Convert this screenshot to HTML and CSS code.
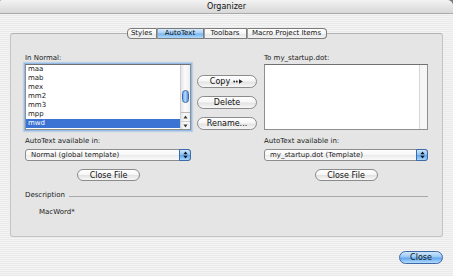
FILE: index.html
```html
<!DOCTYPE html>
<html>
<head>
<meta charset="utf-8">
<link rel="stylesheet" href="styles.css">
</head>
<body>
<div class="window">
  <div class="titlebar">Organizer</div>
  <div class="body">
    <div class="tabs">
      <span class="tab t1">Styles</span><span class="tab t2 sel">AutoText</span><span class="tab t3">Toolbars</span><span class="tab t4">Macro Project Items</span>
    </div>
    <div class="group">
      <div class="lists">
        <div class="col-left">
          <div class="label">In Normal:</div>
          <div class="list focus">
            <ul class="items">
              <li>maa</li>
              <li>mab</li>
              <li>mex</li>
              <li>mm2</li>
              <li>mm3</li>
              <li>mpp</li>
              <li class="sel">mwd</li>
            </ul>
            <div class="scroll">
              <div class="thumb"></div>
              <div class="arrows">
                <div class="arrow"><svg width="5" height="4" viewBox="0 0 5 4"><polygon points="2.5,0.5 4.5,3.5 0.5,3.5" fill="#333"/></svg></div>
                <div class="arrow"><svg width="5" height="4" viewBox="0 0 5 4"><polygon points="0.5,0.5 4.5,0.5 2.5,3.5" fill="#333"/></svg></div>
              </div>
            </div>
          </div>
        </div>
        <div class="col-mid">
          <button class="btn">Copy <svg class="copyarrow" width="11" height="5" viewBox="0 0 11 5"><circle cx="1.2" cy="2.5" r="0.9" fill="#222"/><circle cx="3.8" cy="2.5" r="0.9" fill="#222"/><polygon points="6,0.3 9.8,2.5 6,4.7" fill="#222"/></svg></button>
          <button class="btn">Delete</button>
          <button class="btn">Rename...</button>
        </div>
        <div class="col-right">
          <div class="label">To my_startup.dot:</div>
          <div class="list">
            <ul class="items"></ul>
            <div class="scroll empty"></div>
          </div>
        </div>
      </div>
      <div class="avail">
        <div class="avail-col avail-left">
          <div class="label">AutoText available in:</div>
          <div class="select">
            <span class="select-text">Normal (global template)</span>
            <span class="select-btn"><svg width="5" height="8" viewBox="0 0 5 8"><polygon points="2.5,0.5 4.6,3.2 0.4,3.2" fill="#111"/><polygon points="0.4,4.8 4.6,4.8 2.5,7.5" fill="#111"/></svg></span>
          </div>
          <button class="btn closefile">Close File</button>
        </div>
        <div class="avail-col avail-right">
          <div class="label">AutoText available in:</div>
          <div class="select">
            <span class="select-text">my_startup.dot (Template)</span>
            <span class="select-btn"><svg width="5" height="8" viewBox="0 0 5 8"><polygon points="2.5,0.5 4.6,3.2 0.4,3.2" fill="#111"/><polygon points="0.4,4.8 4.6,4.8 2.5,7.5" fill="#111"/></svg></span>
          </div>
          <button class="btn closefile">Close File</button>
        </div>
      </div>
      <div class="desc">
        <div class="desc-head"><span class="desc-label">Description</span><span class="rule"></span></div>
        <div class="desc-text">MacWord*</div>
      </div>
    </div>
    <div class="footer">
      <button class="btn default">Close</button>
    </div>
  </div>
</div>
</body>
</html>
```

FILE: styles.css
```css
* { box-sizing: border-box; margin: 0; padding: 0; }
html, body { width: 453px; height: 276px; overflow: hidden; background: #7a7a7a; }
body { font-family: "DejaVu Sans", "Liberation Sans", sans-serif; font-size: 7px; color: #1a1a1a; }

.window {
  width: 453px; height: 276px;
  background: repeating-linear-gradient(to bottom, #f4f4f4 0, #f4f4f4 1px, #eaeaea 1px, #eaeaea 2px);
  border-top-right-radius: 6px;
  border-top-left-radius: 2px;
  overflow: hidden;
  display: flex; flex-direction: column;
}
.titlebar {
  flex: none; height: 14px;
  background: linear-gradient(#f3f3f3, #e2e2e2 60%, #d8d8d8);
  border-bottom: 1px solid #a9a9a9;
  font-size: 8px; line-height: 13px; text-align: center; color: #111;
}
.body { flex: 1; padding: 0 10px; display: flex; flex-direction: column; }

.tabs { display: flex; justify-content: center; margin-top: 14px; height: 11px; position: relative; z-index: 1; }
.tab {
  height: 11px; line-height: 9px; text-align: center; color: #111;
  border: 1px solid #7c7c7c; border-left: 1px solid #9c9c9c;
  background: linear-gradient(#ffffff, #f5f5f5 50%, #e6e6e6 52%, #f2f2f2);
}
.tab.t1 { width: 30px; border-left-color: #7c7c7c; border-radius: 4px 0 0 4px; }
.tab.t2 { width: 47px; }
.tab.t3 { width: 43px; }
.tab.t4 { width: 80px; border-radius: 0 4px 4px 0; }
.tab.sel { background: linear-gradient(#d4eafc, #a4cff6 48%, #74b3ef 52%, #b0d9fb); }

.group {
  margin-top: -6px; height: 204px;
  border: 1px solid #c3c3c3; border-top-color: #b2b2b2;
  border-radius: 3px; background: #e5e5e5;
  padding: 20px 14px 0 14px;
}

.lists { display: flex; height: 76px; }
.col-left { width: 167px; }
.col-mid { width: 60px; margin-left: 5px; padding-top: 21px; display: flex; flex-direction: column; gap: 8px; }
.col-right { width: 164px; margin-left: 7px; }
.label { height: 9px; line-height: 9px; margin-bottom: 1px; white-space: nowrap; }

.list { height: 66px; border: 1px solid #8f8f8f; border-top-color: #707070; background: #fff; display: flex; }
.list.focus { width: 166px; box-shadow: 0 0 0 1px #93bbe8, 0 0 1px 2px rgba(120,170,230,.35); }
.items { flex: 1; list-style: none; }
.items li { height: 9px; line-height: 9px; padding-left: 2px; }
.items li.sel { background: #3b73d5; color: #fff; }

.scroll {
  width: 10px; border-left: 1px solid #cfcfcf;
  background: linear-gradient(to right, #e6e6e6, #fbfbfb 45%, #eeeeee);
  display: flex; flex-direction: column; align-items: center;
}
.thumb {
  margin-top: 25px; width: 7px; height: 13px; border-radius: 4px;
  border: 1px solid #3a6bb0;
  background: linear-gradient(to right, #6fa6e6, #b9dbfb 45%, #4f8fdc);
}
.arrows { margin-top: auto; width: 100%; border-top: 1px solid #b9b9b9; }
.arrow { height: 8px; display: flex; align-items: center; justify-content: center; }
.arrow + .arrow { border-top: 1px solid #cfcfcf; }
.scroll.empty { width: 8px; border-left-color: #d6d6d6; background: #f6f6f6; }

.btn {
  display: flex; align-items: center; justify-content: center; gap: 2px;
  height: 13px; border: 1px solid #8b8b8b; border-radius: 7px;
  background: linear-gradient(#ffffff, #f6f6f6 45%, #e3e3e3 55%, #f7f7f7);
  font-family: "DejaVu Sans", "Liberation Sans", sans-serif; font-size: 8px; line-height: 11px; color: #111;
  white-space: nowrap;
}
.copyarrow { margin-left: 1px; }

.avail { display: flex; margin-top: 7px; }
.avail-col { display: flex; flex-direction: column; }
.avail-left { width: 167px; }
.avail-right { width: 164px; margin-left: 72px; }
.select {
  margin-top: 2px; height: 12px; display: flex;
  border: 1px solid #8c8c8c; border-radius: 3px;
  background: linear-gradient(#ffffff, #f6f6f6 50%, #ececec 55%, #fafafa);
}
.avail-left .select { width: 166px; }
.select-text { flex: 1; padding-left: 5px; line-height: 10px; white-space: nowrap; }
.select-btn {
  width: 12px; margin: -1px -1px -1px 0; border: 1px solid #3d6aa8; border-radius: 0 3px 3px 0;
  background: linear-gradient(#cde6fc, #8cc2f3 48%, #5ea5ec 52%, #a9d6fb);
  display: flex; align-items: center; justify-content: center;
}
.closefile { margin-top: 8px; width: 63px; height: 12px; align-self: center; }

.desc { margin-top: 10px; }
.desc-head { display: flex; align-items: center; height: 9px; line-height: 9px; }
.rule { flex: 1; height: 1px; margin: 2px 0 0 4px; background: #a9a9a9; }
.desc-text { margin-top: 8px; padding-left: 14px; height: 9px; line-height: 9px; }

.footer { margin-top: 14px; display: flex; justify-content: flex-end; }
.btn.default {
  width: 44px; border-color: #3f68a6;
  background: linear-gradient(#cfe6fc, #98c9f5 45%, #62a6ee 55%, #b3dbfb);
}
```
